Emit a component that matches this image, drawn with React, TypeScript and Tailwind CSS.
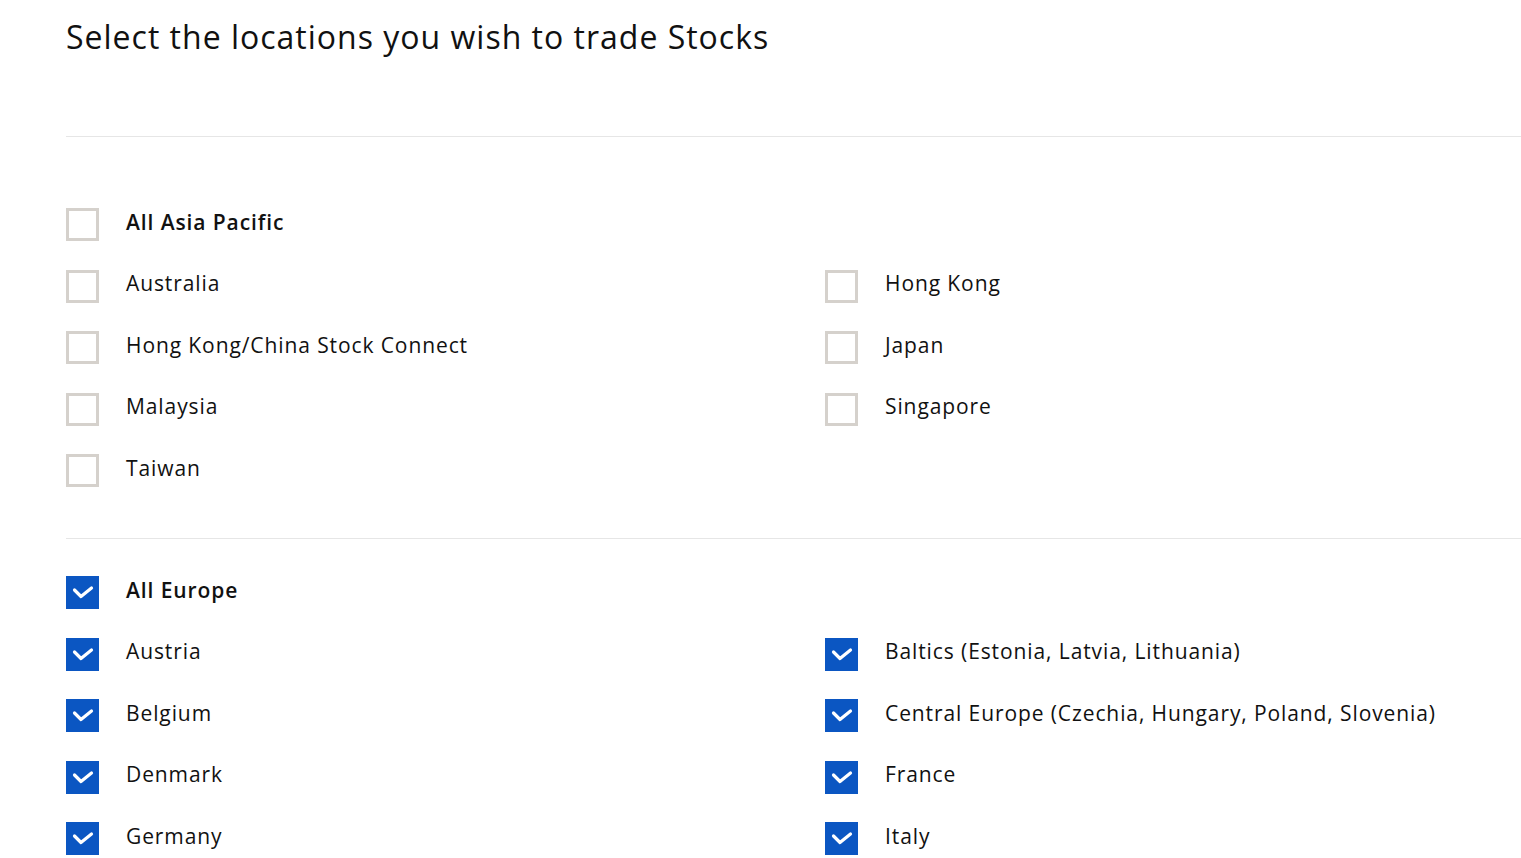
import React from "react";

type Item = { label: string; checked: boolean };

function Box({ checked }: { checked: boolean }) {
  if (checked) {
    return (
      <div className="w-[33px] h-[33px] shrink-0 bg-[#0b56c2]">
        <svg width="33" height="33" viewBox="0 0 33 33" className="block">
          <polyline points="8.5,14 15,20.5 25.5,12" fill="none" stroke="white" strokeWidth="3.2" strokeLinecap="round" strokeLinejoin="round" />
        </svg>
      </div>
    );
  }
  return <div className="w-[33px] h-[33px] shrink-0 border-[3px] border-[#d5d1cc] bg-white" />;
}

function Row({ item, bold }: { item: Item; bold?: boolean }) {
  return (
    <div className="flex items-center h-[33px]">
      <Box checked={item.checked} />
      <span className={`ml-[27px] -mt-[6px] text-[21px] leading-[28px] tracking-[0.9px] text-[#111] whitespace-nowrap ${bold ? "font-semibold" : ""}`}>{item.label}</span>
    </div>
  );
}

function Section({ all, items, className }: { all: Item; items: Item[]; className: string }) {
  return (
    <div className={className}>
      <div className="grid grid-cols-[759px_1fr] gap-y-[28.5px]">
        <div className="col-span-2">
          <Row item={all} bold />
        </div>
        {items.map((it) => (
          <Row key={it.label} item={it} />
        ))}
      </div>
    </div>
  );
}

export default function App() {
  const asia: Item[] = [
    { label: "Australia", checked: false },
    { label: "Hong Kong", checked: false },
    { label: "Hong Kong/China Stock Connect", checked: false },
    { label: "Japan", checked: false },
    { label: "Malaysia", checked: false },
    { label: "Singapore", checked: false },
    { label: "Taiwan", checked: false },
  ];
  const europe: Item[] = [
    { label: "Austria", checked: true },
    { label: "Baltics (Estonia, Latvia, Lithuania)", checked: true },
    { label: "Belgium", checked: true },
    { label: "Central Europe (Czechia, Hungary, Poland, Slovenia)", checked: true },
    { label: "Denmark", checked: true },
    { label: "France", checked: true },
    { label: "Germany", checked: true },
    { label: "Italy", checked: true },
  ];
  return (
    <div className="bg-white h-[858px] overflow-hidden pl-[66px]" style={{ fontFamily: "'Open Sans', sans-serif" }}>
      <h1 className="pt-[15px] text-[32px] leading-[44px] tracking-[1px] text-[#111] font-normal whitespace-nowrap">Select the locations you wish to trade Stocks</h1>
      <div className="mt-[77px] border-t border-[#e6e6e6]" />
      <Section all={{ label: "All Asia Pacific", checked: false }} items={asia} className="pt-[71px] pb-[51px]" />
      <div className="border-t border-[#e6e6e6]" />
      <Section all={{ label: "All Europe", checked: true }} items={europe} className="pt-[37px]" />
    </div>
  );
}
